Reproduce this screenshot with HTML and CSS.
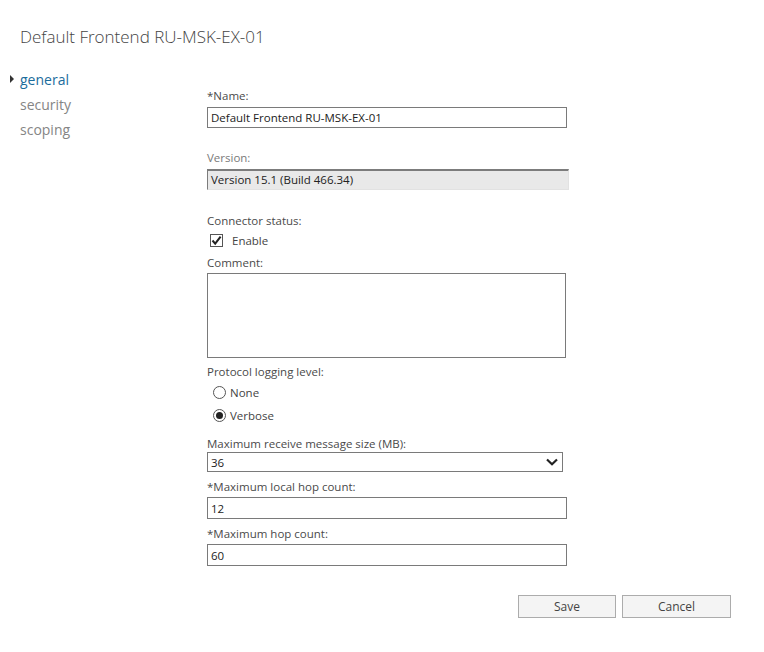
FILE: index.html
```html
<!DOCTYPE html>
<html lang="en">
<head>
    <meta charset="UTF-8">
    <title>Default Frontend RU-MSK-EX-01</title>
    <link rel="stylesheet" href="styles.css">
</head>
<body>
    <h1 class="title">Default Frontend RU-MSK-EX-01</h1>

    <div class="layout">
        <ul class="nav">
            <li class="nav-item active">general</li>
            <li class="nav-item">security</li>
            <li class="nav-item">scoping</li>
        </ul>

        <form class="form">
            <div class="field">
                <label class="label">*Name:</label>
                <input class="text-input name-input" type="text" value="Default Frontend RU-MSK-EX-01">
            </div>

            <div class="field gap-big">
                <label class="label disabled">Version:</label>
                <div class="readonly">Version 15.1 (Build 466.34)</div>
            </div>

            <div class="field gap-connector">
                <label class="label">Connector status:</label>
                <div class="check-row">
                    <span class="checkbox">
                        <svg width="11" height="11" viewBox="0 0 11 11"><path d="M1.5 5.5 L4.2 8.6 L9.6 1.6" fill="none" stroke="#222" stroke-width="2"/></svg>
                    </span>
                    <span>Enable</span>
                </div>
            </div>

            <div class="field gap-small">
                <label class="label">Comment:</label>
                <textarea class="comment"></textarea>
            </div>

            <div class="field gap-protocol">
                <label class="label">Protocol logging level:</label>
                <div class="radio-row first">
                    <span class="radio"></span>
                    <span>None</span>
                </div>
                <div class="radio-row">
                    <span class="radio checked"></span>
                    <span>Verbose</span>
                </div>
            </div>

            <div class="field gap-mid">
                <label class="label">Maximum receive message size (MB):</label>
                <div class="select">
                    <span>36</span>
                    <svg width="12" height="8" viewBox="0 0 12 8"><path d="M1 1.5 L6 6.2 L11 1.5" fill="none" stroke="#222" stroke-width="2.2"/></svg>
                </div>
            </div>

            <div class="field gap-hop">
                <label class="label">*Maximum local hop count:</label>
                <input class="text-input local-input" type="text" value="12">
            </div>

            <div class="field gap-hop-last">
                <label class="label">*Maximum hop count:</label>
                <input class="text-input" type="text" value="60">
            </div>
        </form>
    </div>

    <div class="buttons">
        <button class="btn save" type="button">Save</button>
        <button class="btn cancel" type="button">Cancel</button>
    </div>
</body>
</html>
```

FILE: styles.css
```css
body {
    margin: 0;
    padding: 0;
    font-family: "Open Sans", "Segoe UI", sans-serif;
    color: #444;
    background: #fff;
}

.title {
    margin: 0;
    padding: 27px 0 0 20px;
    font-size: 17px;
    font-weight: 300;
    line-height: 20px;
    color: #444;
}

.layout {
    display: flex;
    margin-top: 20px;
}

/* left navigation */
.nav {
    list-style: none;
    margin: 0;
    padding: 0 0 0 20px;
    width: 187px;
}

.nav-item {
    font-size: 14px;
    line-height: 25px;
    color: #858585;
}

.nav-item.active {
    color: #1b6c9c;
}

.nav-item.active::before {
    content: "";
    display: inline-block;
    border-left: 4px solid #333;
    border-top: 4px solid transparent;
    border-bottom: 4px solid transparent;
    margin-left: -10px;
    margin-right: 6px;
    vertical-align: 2px;
}

/* form column */
.form {
    display: flex;
    flex-direction: column;
    padding-top: 21px;
    font-size: 11.5px;
}

.field {
    display: flex;
    flex-direction: column;
    align-items: flex-start;
}

.gap-big {
    margin-top: 22px;
}

.gap-connector {
    margin-top: 23px;
}

.gap-protocol {
    margin-top: 6px;
}

.gap-mid {
    margin-top: 13px;
}

.gap-small {
    margin-top: 7px;
}

.gap-hop {
    margin-top: 7px;
}

.gap-hop-last {
    margin-top: 7px;
}

.label {
    line-height: 16px;
    color: #4a4a4a;
}

.label.disabled {
    color: #7a7a7a;
}

.text-input {
    box-sizing: border-box;
    width: 360px;
    height: 22px;
    margin: 2px 0 0;
    padding: 0 3px;
    border: 1px solid #7a7a7a;
    font-family: inherit;
    font-size: 11.5px;
    color: #222;
    outline: none;
}

.name-input {
    margin-top: 3px;
    height: 21px;
}

.local-input {
    margin-top: 2px;
}

.readonly {
    box-sizing: border-box;
    width: 362px;
    height: 21px;
    margin-top: 3px;
    padding: 0 3px;
    line-height: 18px;
    background: #e9e9e9;
    border-top: 2px solid #7c7c7c;
    border-left: 1px solid #7c7c7c;
    border-right: 1px solid #e2e2e2;
    border-bottom: 1px solid #e2e2e2;
    color: #222;
}

.check-row {
    display: flex;
    align-items: center;
    height: 16px;
    margin-top: 3px;
    padding-left: 3px;
    gap: 9px;
}

.checkbox {
    box-sizing: border-box;
    display: flex;
    align-items: center;
    justify-content: center;
    width: 13px;
    height: 13px;
    border: 1px solid #555;
    background: #fff;
}

.comment {
    box-sizing: border-box;
    width: 359px;
    height: 85px;
    margin: 2px 0 0;
    border: 1px solid #7a7a7a;
    resize: none;
    outline: none;
}

.radio-row {
    display: flex;
    align-items: center;
    height: 16px;
    margin-top: 7px;
    padding-left: 6px;
    gap: 4px;
}

.radio-row.first {
    margin-top: 4px;
}

.radio {
    box-sizing: border-box;
    display: flex;
    align-items: center;
    justify-content: center;
    width: 13px;
    height: 13px;
    border: 1px solid #555;
    border-radius: 50%;
    background: #fff;
}

.radio.checked::after {
    content: "";
    width: 7px;
    height: 7px;
    border-radius: 50%;
    background: #222;
}

.select {
    box-sizing: border-box;
    display: flex;
    align-items: center;
    justify-content: space-between;
    width: 356px;
    height: 20px;
    margin-top: 0;
    padding: 0 4px 0 3px;
    border: 1px solid #7a7a7a;
    color: #222;
}

/* bottom buttons */
.buttons {
    display: flex;
    justify-content: flex-end;
    gap: 6px;
    margin-top: 29px;
    padding-right: 33px;
}

.btn {
    box-sizing: border-box;
    height: 23px;
    border: 1px solid #acacac;
    background: #f4f4f4;
    font-family: inherit;
    font-size: 12px;
    color: #444;
}

.save {
    width: 98px;
}

.cancel {
    width: 109px;
}
```
